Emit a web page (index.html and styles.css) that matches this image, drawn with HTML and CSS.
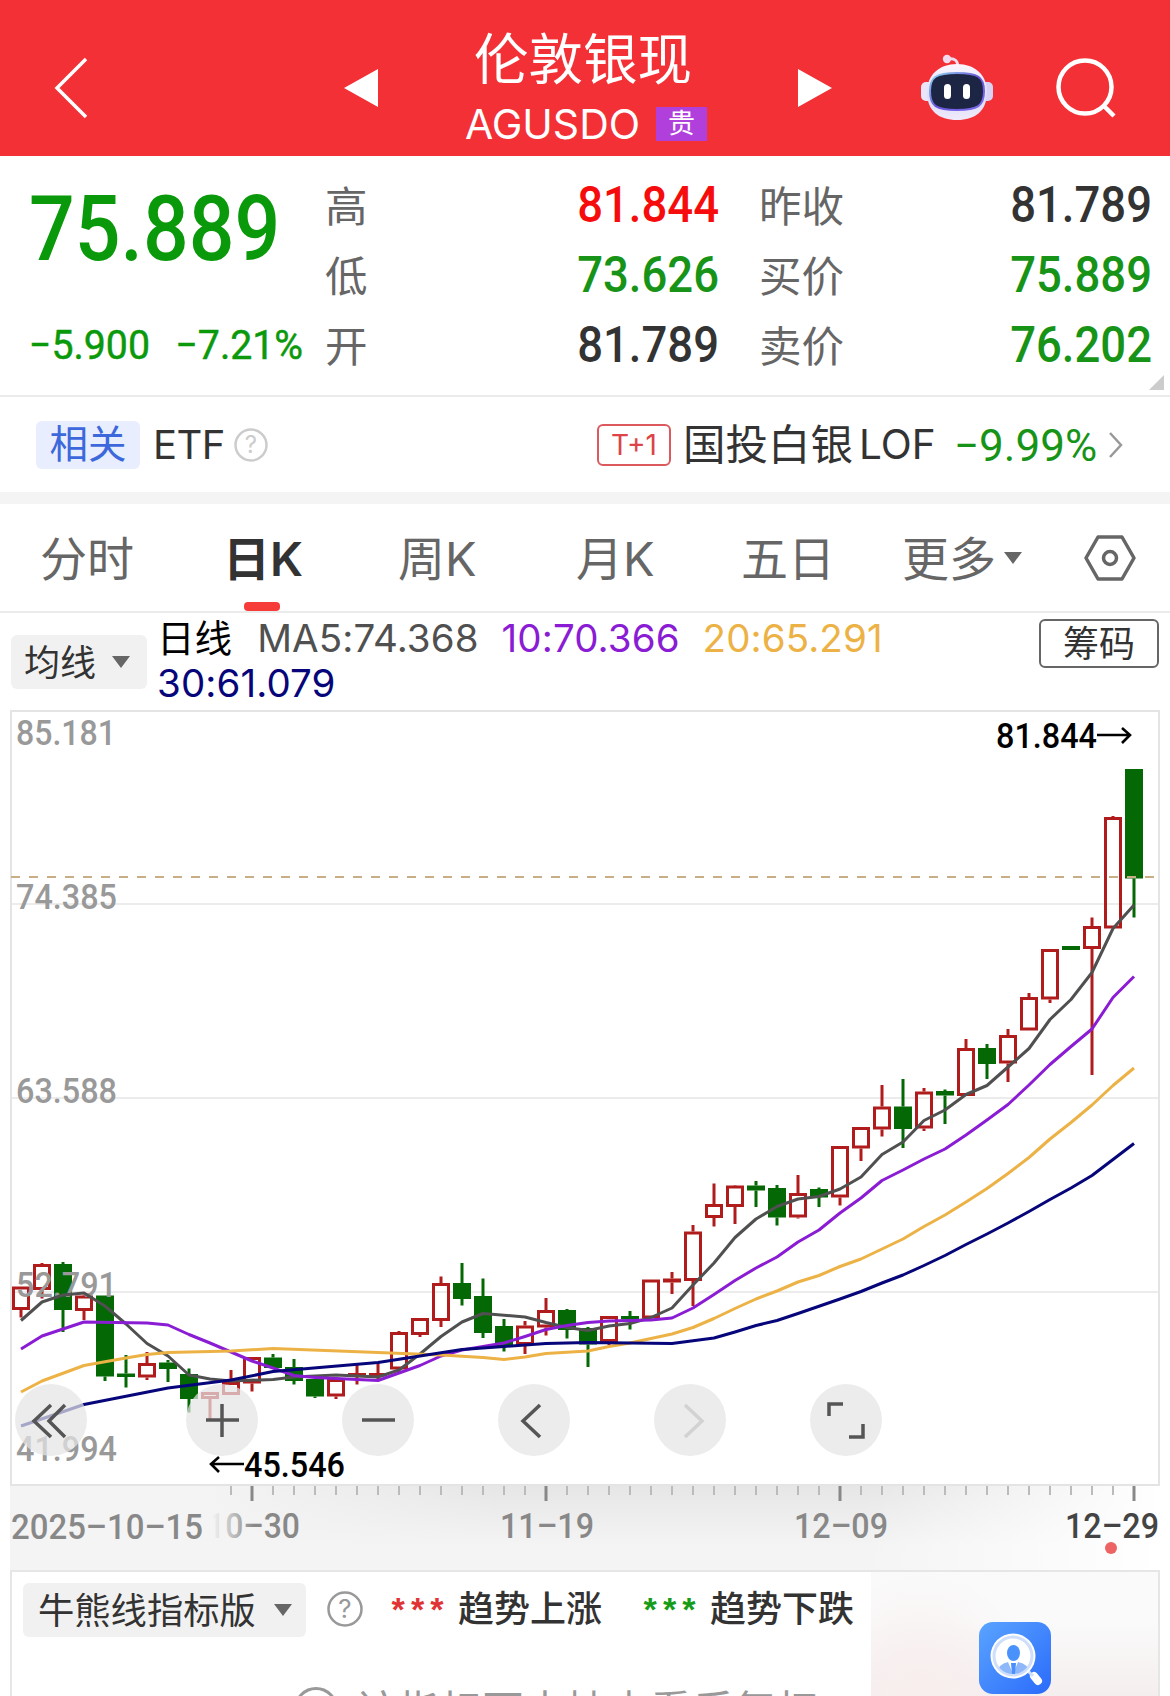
FILE: index.html
```html
<!DOCTYPE html>
<html lang="zh-CN">
<head>
    <meta charset="UTF-8">
    <meta name="viewport" content="width=device-width, initial-scale=1.0">
    <title>伦敦银现</title>
    <link rel="stylesheet" href="styles.css">
</head>
<body>

    <header class="header">
        <svg class="back" width="36" height="62" viewBox="0 0 36 62"><path d="M33 2 L4 31 L33 60" fill="none" stroke="#fff" stroke-width="3.5"/></svg>
        <svg class="prev" width="36" height="40" viewBox="0 0 36 40"><path d="M35 1 V39 L1 20 Z" fill="#fff"/></svg>
        <div class="title">
            <div class="name">伦敦银现</div>
            <div class="code">AGUSDO <span class="tag">贵</span></div>
        </div>
        <svg class="next" width="36" height="40" viewBox="0 0 36 40"><path d="M1 1 V39 L35 20 Z" fill="#fff"/></svg>
        <svg class="robot" width="72" height="68" viewBox="0 0 72 68">
            <defs>
                <linearGradient id="shell" x1="0" y1="0" x2="0" y2="1">
                    <stop offset="0" stop-color="#fbf6ff"/>
                    <stop offset=".6" stop-color="#dcdcf6"/>
                    <stop offset="1" stop-color="#f0eafc"/>
                </linearGradient>
                <linearGradient id="rim" x1="0" y1="0" x2="1" y2="1">
                    <stop offset="0" stop-color="#8fdcf0"/>
                    <stop offset=".5" stop-color="#6a55d8"/>
                    <stop offset="1" stop-color="#7d6cf0"/>
                </linearGradient>
            </defs>
            <path d="M27 5 Q37 3 37 14" fill="none" stroke="#f3d9ee" stroke-width="3"/>
            <circle cx="26" cy="5" r="4.2" fill="#f3d9ee"/>
            <rect x="0" y="28" width="14" height="19" rx="5" fill="#e9e4fa"/>
            <rect x="58" y="28" width="14" height="19" rx="5" fill="#d9d2f4"/>
            <path d="M36 10 C54 10 66 21 66 38 C66 57 54 66 36 66 C18 66 6 57 6 38 C6 21 18 10 36 10 Z" fill="url(#shell)"/>
            <path d="M36 19 C57 19 63 23 63 37 C63 52 57 56 36 56 C15 56 9 52 9 37 C9 23 15 19 36 19 Z" fill="#1d2545" stroke="url(#rim)" stroke-width="2"/>
            <rect x="23" y="30" width="7" height="15" rx="3.5" fill="#fff"/>
            <rect x="42" y="30" width="7" height="15" rx="3.5" fill="#fff"/>
        </svg>
        <svg class="search" width="62" height="62" viewBox="0 0 62 62"><circle cx="30" cy="30" r="26.5" fill="none" stroke="#fff" stroke-width="4.5"/><path d="M48 48 L59 59" stroke="#fff" stroke-width="4.5"/></svg>
    </header>

    <section class="quote">
        <div class="main-price">
            <div class="price">75.889</div>
            <div class="change"><span>−5.900</span><span>−7.21%</span></div>
        </div>
        <div class="quote-grid">
            <span class="label">高</span><span class="num up">81.844</span>
            <span class="label second">昨收</span><span class="num">81.789</span>
            <span class="label">低</span><span class="num down">73.626</span>
            <span class="label second">买价</span><span class="num down">75.889</span>
            <span class="label">开</span><span class="num">81.789</span>
            <span class="label second">卖价</span><span class="num down">76.202</span>
        </div>
        <span class="corner"></span>
    </section>

    <section class="related">
        <span class="related-tag">相关</span>
        <span class="etf">ETF</span>
        <svg class="help" width="34" height="34" viewBox="0 0 34 34"><circle cx="17" cy="17" r="15.5" fill="none" stroke="#ccc" stroke-width="2.5"/><text x="17" y="25" text-anchor="middle">?</text></svg>
        <span class="t1">T+1</span>
        <span class="fund">国投白银</span><span class="lof">LOF</span>
        <span class="fund-change">−9.99%</span>
        <svg class="arrow" width="16" height="28" viewBox="0 0 16 28"><path d="M2 2 L13 14 L2 26" fill="none" stroke="#999" stroke-width="2.5"/></svg>
    </section>

    <nav class="tabs">
        <span class="tab">分时</span>
        <span class="tab active">日<i>K</i></span>
        <span class="tab">周<i>K</i></span>
        <span class="tab month">月<i>K</i></span>
        <span class="tab">五日</span>
        <span class="tab more">更多<b class="caret"></b></span>
        <svg class="setting" width="52" height="46" viewBox="0 0 52 46"><path d="M14 2 H38 L50 23 L38 44 H14 L2 23 Z" fill="none" stroke="#666" stroke-width="3.5" stroke-linejoin="round"/><circle cx="26" cy="23" r="6.5" fill="none" stroke="#666" stroke-width="3.5"/></svg>
    </nav>

    <section class="ma-bar">
        <div class="select"><span>均线</span><b class="caret"></b></div>
        <div class="ma-list">
            <span class="ma-name">日线</span>
            <span class="ma5">MA5:74.368</span>
            <span class="ma10">10:70.366</span>
            <span class="ma20">20:65.291</span>
            <span class="ma30">30:61.079</span>
        </div>
        <div class="chip">筹码</div>
    </section>

    <svg id="chart" class="chart" width="1170" height="860" viewBox="0 710 1170 860">
        <defs>
            <linearGradient id="axisRight" x1="0" y1="0" x2="1" y2="0">
                <stop offset="0" stop-color="#fff" stop-opacity="0"/>
                <stop offset="1" stop-color="#fff"/>
            </linearGradient>
            <linearGradient id="axisShade" x1="0" y1="0" x2="0" y2="1">
                <stop offset="0" stop-color="#e6e6e6"/>
                <stop offset="1" stop-color="#f4f4f4"/>
            </linearGradient>
            <linearGradient id="axisLeft" x1="0" y1="0" x2="1" y2="0">
                <stop offset="0" stop-color="#f4f4f4"/>
                <stop offset="1" stop-color="#f4f4f4" stop-opacity="0"/>
            </linearGradient>
            <linearGradient id="dateFade" gradientUnits="userSpaceOnUse" x1="212" y1="0" x2="254" y2="0">
                <stop offset="0" stop-color="#888" stop-opacity="0"/>
                <stop offset="1" stop-color="#888"/>
            </linearGradient>
        </defs>

        <!-- grid -->
        <rect x="11" y="711" width="1148" height="774" fill="#fff" stroke="#e4e4e4" stroke-width="2"/>
        <path d="M11 904 H1159 M11 1098 H1159 M11 1292 H1159" stroke="#e6e6e6" stroke-width="1.5"/>

        <!-- time axis -->
        <rect x="10" y="1486" width="1150" height="84" fill="#f4f4f4"/>
        <rect x="200" y="1486" width="960" height="60" fill="url(#axisShade)"/>
        <rect x="200" y="1486" width="300" height="60" fill="url(#axisLeft)"/>
        <rect x="860" y="1486" width="300" height="84" fill="url(#axisRight)"/>

        <g id="candles"></g>
        <path d="M11 877 H1159" stroke="#c8ae84" stroke-width="2" stroke-dasharray="9 9"/>

        <g class="y-label">
            <text x="16" y="745" textLength="100" lengthAdjust="spacingAndGlyphs">85.181</text>
            <text x="16" y="909" textLength="101" lengthAdjust="spacingAndGlyphs">74.385</text>
            <text x="16" y="1103" textLength="101" lengthAdjust="spacingAndGlyphs">63.588</text>
            <text x="16" y="1297" textLength="101" lengthAdjust="spacingAndGlyphs">52.791</text>
            <text x="16" y="1461" textLength="101" lengthAdjust="spacingAndGlyphs">41.994</text>
        </g>
        <g id="lines" fill="none" stroke-width="3" stroke-linejoin="round"></g>

        <g class="mark">
            <text x="996" y="748" textLength="101" lengthAdjust="spacingAndGlyphs">81.844</text>
            <path d="M1097 735 H1130 M1122 728 L1130 735 L1122 743" fill="none" stroke="#000" stroke-width="2.6"/>
            <text x="244" y="1477" textLength="101" lengthAdjust="spacingAndGlyphs">45.546</text>
            <path d="M244 1464 H211 M219 1457 L211 1464 L219 1472" fill="none" stroke="#000" stroke-width="2.6"/>
        </g>

        <g id="ticks" stroke-width="2"></g>
        <g class="date">
            <text x="11" y="1539" textLength="192" lengthAdjust="spacingAndGlyphs">2025–10–15</text>
            <text x="207" y="1538" textLength="93" lengthAdjust="spacingAndGlyphs" fill="url(#dateFade)">10–30</text>
            <text x="500" y="1538" textLength="94" lengthAdjust="spacingAndGlyphs">11–19</text>
            <text x="794" y="1538" textLength="94" lengthAdjust="spacingAndGlyphs">12–09</text>
            <text x="1065" y="1538" textLength="94" lengthAdjust="spacingAndGlyphs" fill="#444">12–29</text>
        </g>
        <circle cx="1111" cy="1548" r="6" fill="#ee6363"/>

        <!-- floating buttons -->
        <g fill="#e4e4e4" fill-opacity=".72">
            <circle cx="51" cy="1420" r="36"/>
            <circle cx="222" cy="1420" r="36"/>
            <circle cx="378" cy="1420" r="36"/>
            <circle cx="534" cy="1420" r="36"/>
            <circle cx="690" cy="1420" r="36"/>
            <circle cx="846" cy="1420" r="36"/>
        </g>
        <g fill="none" stroke="#555" stroke-width="3.5">
            <path d="M51 1405 L34 1421 L51 1437 M65 1405 L49 1421 L65 1437"/>
            <path d="M206 1420 H239 M222 1404 V1437"/>
            <path d="M362 1420 H395"/>
            <path d="M540 1405 L523 1421 L540 1437"/>
            <path d="M685 1405 L702 1421 L685 1437" stroke="#d2d2d2"/>
            <path d="M829 1416 V1404 H843 M849 1437 H863 V1424"/>
        </g>
    </svg>

    <section class="indicator">
        <div class="select"><span>牛熊线指标版</span><b class="caret"></b></div>
        <svg class="help dark" width="36" height="36" viewBox="0 0 36 36"><circle cx="18" cy="18" r="16.5" fill="none" stroke="#999" stroke-width="2.5"/><text x="18" y="27" text-anchor="middle">?</text></svg>
        <span class="stars red">***</span>
        <span class="trend">趋势上涨</span>
        <span class="stars green">***</span>
        <span class="trend">趋势下跌</span>
        <div class="notice">
            <svg width="44" height="44" viewBox="0 0 44 44"><circle cx="22" cy="22" r="20.5" fill="none" stroke="#999" stroke-width="3"/><path d="M22 12 V25 M22 29 V33" stroke="#999" stroke-width="3"/></svg>
            <span>该指标不支持查看后复权</span>
        </div>
        <div class="promo">
            <svg width="72" height="72" viewBox="0 0 72 72">
                <defs>
                    <linearGradient id="blue" x1="0" y1="0" x2="1" y2="1">
                        <stop offset="0" stop-color="#5aa4ff"/>
                        <stop offset="1" stop-color="#2a6bfb"/>
                    </linearGradient>
                    <clipPath id="lens"><circle cx="34" cy="34" r="18"/></clipPath>
                </defs>
                <rect width="72" height="72" rx="14" fill="url(#blue)"/>
                <path d="M55 54 L59 59" stroke="#fff" stroke-width="8" stroke-linecap="round"/>
                <path d="M47 47 L54 54" stroke="#cfe0ff" stroke-width="3"/>
                <circle cx="34" cy="34" r="22.5" fill="#fff"/>
                <circle cx="34" cy="34" r="19" fill="#fff" stroke="#cfdffb" stroke-width="3"/>
                <g clip-path="url(#lens)">
                    <path d="M18 54 Q18 42 29 40 L34 52 L39 40 Q51 42 51 54 Z" fill="#8fb8fb"/>
                    <path d="M32 41 H37 L36 52 H33 Z" fill="#4a8ffb"/>
                </g>
                <ellipse cx="34.500" cy="31" rx="6.500" ry="8" fill="#4a92fb"/>
            </svg>
        </div>
    </section>

    <script>
        const START = 21;
        const STEP = 21;

        // [rising, high, body top, body bottom, low]
        const candles = [
            [1, 1286.5, 1286.5, 1310, 1317.5], [1, 1263, 1264, 1290, 1298.5], [0, 1262, 1264, 1310, 1332],
            [1, 1295, 1295.5, 1311, 1320], [0, 1295.5, 1295.5, 1376.5, 1381], [0, 1355, 1373.5, 1377, 1387.5],
            [1, 1352, 1363, 1377.5, 1380], [0, 1360, 1362.5, 1369, 1382], [0, 1368.5, 1374, 1399, 1412.5],
            [1, 1392, 1392, 1399, 1421], [1, 1370, 1382, 1395, 1395], [1, 1357, 1357, 1383.5, 1391.5],
            [0, 1354, 1357.5, 1368, 1368], [0, 1359, 1367, 1381, 1384.5], [0, 1379, 1379, 1396.5, 1398],
            [1, 1378, 1379, 1396.5, 1399], [1, 1364, 1373, 1377, 1384.5], [1, 1362, 1373, 1376.5, 1380],
            [1, 1331, 1332, 1369.5, 1372], [1, 1318, 1318, 1335, 1337], [1, 1276.5, 1283, 1321, 1327],
            [0, 1263, 1283, 1299, 1305.5], [0, 1278.5, 1296, 1333, 1338], [0, 1319, 1326, 1347, 1351.5],
            [1, 1321, 1325.5, 1345, 1354], [1, 1298, 1310, 1327.5, 1335.5], [0, 1309, 1310, 1330, 1338.5],
            [0, 1327, 1328, 1344.5, 1367], [1, 1316, 1316, 1342, 1345], [0, 1311, 1316, 1319.5, 1329.5],
            [1, 1279.5, 1279.5, 1318.5, 1318.5], [1, 1272, 1278.5, 1282.5, 1294], [1, 1225, 1231.5, 1281, 1306],
            [1, 1183.5, 1204, 1218, 1226.5], [1, 1185, 1185.5, 1207, 1224], [0, 1181, 1185.5, 1190.5, 1207],
            [0, 1185, 1188, 1217.5, 1225.5], [1, 1175, 1193, 1217.5, 1218.5], [0, 1187.5, 1189, 1197.5, 1207],
            [1, 1146, 1146, 1197.5, 1205.5], [1, 1127, 1127, 1148.5, 1161], [1, 1085, 1106.5, 1129.5, 1136.5],
            [0, 1079, 1106.5, 1129, 1148], [1, 1088, 1091.5, 1128.5, 1131], [0, 1089.5, 1091, 1095.5, 1124],
            [1, 1039, 1048, 1096, 1096], [0, 1044, 1048, 1064, 1079], [1, 1029, 1035, 1063.5, 1082],
            [1, 993, 997, 1030.5, 1030.5], [1, 949, 949, 999.5, 1003], [0, 946, 946, 950, 950],
            [1, 917.5, 926, 949, 1075], [1, 816, 817, 928.5, 928.5], [0, 769, 769, 878.5, 917.5]
        ];

        // each point is [day index, y]
        const lines = [
            { color: "#505050", points: [[0, 1320.5], [1, 1302], [2, 1295], [3, 1293], [4, 1306], [5, 1324], [6, 1343.5], [7, 1356], [8, 1375], [9, 1379], [10, 1381], [12, 1379.5], [13, 1377], [15, 1375], [17, 1377], [18, 1370], [19, 1354], [20, 1336.5], [21, 1322], [22, 1313.5], [24, 1317], [25, 1322.5], [26, 1327.5], [27, 1330.5], [28, 1326], [29, 1323.5], [30, 1317.5], [31, 1308], [32, 1285], [33, 1263], [34, 1237.5], [35, 1219], [36, 1206.5], [37, 1199], [38, 1196.5], [39, 1189], [40, 1177], [41, 1154.5], [42, 1142], [43, 1120.5], [44, 1110], [45, 1094.5], [46, 1085.5], [47, 1067], [48, 1048.5], [49, 1019.5], [50, 999.5], [51, 972.5], [52, 928.5], [53, 905]] },
            { color: "#8a1cd4", points: [[0, 1349], [1, 1336], [2, 1329], [3, 1322], [6, 1323], [7, 1325], [8, 1334.5], [9, 1343], [10, 1352], [11, 1361], [12, 1368], [13, 1375.5], [14, 1377.5], [17, 1380.5], [18, 1373], [19, 1365.5], [20, 1356], [21, 1350], [23, 1343], [24, 1336.5], [25, 1329.5], [26, 1325.5], [27, 1322.5], [28, 1321], [30, 1320], [31, 1318], [32, 1308], [33, 1294.5], [34, 1280.5], [35, 1268], [36, 1257], [37, 1242], [38, 1230], [39, 1213], [40, 1198], [41, 1180.5], [42, 1170], [43, 1159], [44, 1149], [45, 1135], [46, 1120], [47, 1104.5], [48, 1085], [49, 1064.5], [50, 1046.5], [51, 1029], [52, 997.5], [53, 976.5]] },
            { color: "#edb246", points: [[0, 1392], [1, 1381], [3, 1365.5], [5, 1358], [6, 1354.5], [7, 1352.5], [10, 1351], [12, 1348.5], [17, 1352.5], [20, 1355], [22, 1357.5], [23, 1359.5], [24, 1357], [25, 1353.5], [27, 1351], [28, 1346.5], [29, 1343], [30, 1338.5], [31, 1334], [32, 1327.5], [33, 1318.5], [34, 1308.5], [35, 1299], [36, 1291], [37, 1282], [38, 1275.5], [39, 1266.5], [40, 1259], [41, 1249], [42, 1239], [43, 1226.5], [44, 1215], [45, 1202], [46, 1188.5], [47, 1173.5], [48, 1157.5], [49, 1139], [50, 1122.5], [51, 1105], [52, 1085.5], [53, 1068]] },
            { color: "#06067a", points: [[0, 1426], [3, 1404.5], [7, 1388], [10, 1380], [12, 1371.5], [17, 1362.5], [19, 1356], [21, 1349.5], [23, 1346.5], [25, 1343.5], [27, 1342.5], [31, 1343.5], [33, 1338], [34, 1332], [35, 1325.5], [36, 1320.5], [37, 1313.5], [39, 1299], [40, 1291.5], [41, 1283], [42, 1275], [43, 1265.5], [44, 1255.5], [45, 1244.5], [46, 1234], [47, 1223], [48, 1211.5], [49, 1199.5], [50, 1188], [51, 1175.5], [52, 1159.5], [53, 1143.5]] }
        ];

        function drawCandles() {
            let html = "";
            candles.forEach(([rising, high, top, bottom, low], i) => {
                let x = START + i * STEP;
                let color = rising ? "#b01c1c" : "#046804";
                html += `<path d="M${x} ${high} V${top} M${x} ${bottom} V${low}" stroke="${color}" stroke-width="3"/>`;
                if (rising && bottom - top > 5) {
                    html += `<rect x="${x - 7.5}" y="${top + 1.5}" width="15" height="${bottom - top - 3}" fill="none" stroke="${color}" stroke-width="3"/>`;
                } else {
                    html += `<rect x="${x - 9}" y="${top}" width="18" height="${bottom - top}" fill="${color}"/>`;
                }
            });
            document.getElementById("candles").innerHTML = html;
        }

        function drawLines() {
            document.getElementById("lines").innerHTML = lines.map(line => {
                let points = line.points.map(([i, y]) => `${START + i * STEP},${y}`).join(" ");
                return `<polyline points="${points}" stroke="${line.color}"/>`;
            }).join("");
        }

        function drawTicks() {
            let html = "";
            for (let i = 10; i < candles.length; i++) {
                let x = START + i * STEP;
                let major = (i - 11) % 14 === 0;
                html += `<path d="M${x} 1486 V${major ? 1501 : 1495}" stroke="${major ? "#888" : "#bbb"}" stroke-width="${major ? 3 : 2}"/>`;
            }
            document.getElementById("ticks").innerHTML = html;
        }

        drawCandles();
        drawLines();
        drawTicks();
    </script>
</body>
</html>
```
FILE: styles.css
```css
body {
    font-family: Inter, "Noto Sans CJK SC", sans-serif;
    background: #fff;
    color: #333;
    margin: 0;
    width: 1170px;
    height: 1696px;
    overflow: hidden;
}

.header {
    display: flex;
    align-items: center;
    height: 156px;
    background: #f23036;
    color: #fff;
}

.header svg {
    flex: none;
    margin-top: 20px;
}

.back {
    margin-left: 53px;
}

.prev {
    margin-left: 254px;
}

.title {
    width: 418px;
    padding-right: 10px;
    box-sizing: border-box;
    text-align: center;
}

.name {
    font-size: 54.5px;
    line-height: 68px;
    margin-top: 18px;
}

.code {
    display: flex;
    justify-content: center;
    align-items: center;
    font-size: 41px;
    line-height: 56px;
    padding: 3px 0 0 6px;
    margin-bottom: -3px;
}

.tag {
    width: 51px;
    height: 34px;
    margin-left: 16px;
    background: #b03fdc;
    font-size: 27px;
    line-height: 33px;
}

.robot {
    margin-left: 88px;
}

.search {
    margin-left: 62px;
}

.quote {
    position: relative;
    display: flex;
    height: 241px;
    border-bottom: 2px solid #ebebeb;
    box-sizing: border-box;
}

.main-price {
    width: 296px;
    padding-left: 29px;
    color: #0a990a;
    font-family: Roboto, sans-serif;
    font-weight: 500;
    white-space: nowrap;
}

/* narrow digits */
.price {
    font-size: 91px;
    line-height: 100px;
    margin-top: 23px;
    transform: scaleX(0.885);
    transform-origin: left;
}

.change {
    display: flex;
    gap: 27px;
    font-size: 41.5px;
    line-height: 50px;
    font-weight: 400;
    margin-top: 41px;
    transform: scaleX(0.945);
    transform-origin: left;
    -webkit-text-stroke: 0.5px #0a990a;
}

.quote-grid {
    display: grid;
    grid-template-columns: 124px 270px 155px 278px;
    grid-auto-rows: 70px;
    align-items: center;
    height: 210px;
    padding-top: 13px;
}

.label {
    color: #666;
    font-size: 42.5px;
    margin-top: -2px;
}

.label.second {
    padding-left: 40px;
}

.num {
    color: #333;
    font-family: Roboto, sans-serif;
    font-size: 50.5px;
    font-weight: 500;
    text-align: right;
    transform: scaleX(0.9);
    transform-origin: right;
}

.num.up {
    color: #f60c0c;
}

.num.down {
    color: #179417;
}

.corner {
    position: absolute;
    right: 6px;
    bottom: 5px;
    border-left: 15px solid transparent;
    border-bottom: 15px solid #ccc;
}

.related {
    display: flex;
    align-items: center;
    height: 95px;
    padding-left: 36px;
    border-bottom: 12px solid #f4f4f4;
    white-space: nowrap;
}

.related-tag {
    width: 104px;
    height: 48px;
    border-radius: 6px;
    background: #e8eefe;
    color: #3d68dc;
    font-size: 38.5px;
    line-height: 46px;
    text-align: center;
}

.etf {
    width: 81px;
    margin-left: 13px;
    font-size: 40px;
    letter-spacing: -0.5px;
}

.help text {
    fill: #ccc;
    font-size: 24px;
}

.help.dark text {
    fill: #999;
    font-size: 26px;
}

.t1 {
    width: 70px;
    height: 38px;
    margin-left: 329px;
    border: 2px solid #dc5a5e;
    border-radius: 6px;
    color: #dc4448;
    font-size: 28px;
    line-height: 39px;
    text-align: center;
}

.fund {
    margin: -6px 0 0 12px;
    font-size: 42.5px;
}

.lof {
    margin-left: 6px;
    font-size: 40.5px;
}

.fund-change {
    width: 140px;
    margin-left: 18px;
    padding-top: 3px;
    color: #179417;
    font-family: Roboto, sans-serif;
    font-size: 44px;
    letter-spacing: 0.1px;
}

.arrow {
    margin-left: 14px;
}

.tabs {
    display: flex;
    align-items: center;
    height: 109px;
    padding-left: 40px;
    box-sizing: border-box;
    border-bottom: 2px solid #ebebeb;
    color: #666;
    font-size: 47px;
    white-space: nowrap;
}

.tab {
    position: relative;
    top: -2px;
    width: 178px;
}

.tab i {
    font-style: normal;
}

.tab.active {
    color: #333;
    font-weight: 600;
    padding-left: 5px;
    width: 175px;
}

.tab.active::after {
    content: "";
    position: absolute;
    left: 26px;
    bottom: -21px;
    width: 36px;
    height: 9px;
    border-radius: 4px;
    background: #f63c38;
}

.tab.month {
    width: 165px;
}

.tab.more {
    display: flex;
    align-items: center;
    width: 182px;
    margin-left: -17px;
}

.caret {
    border: 9px solid transparent;
    border-top: 12px solid #666;
    border-bottom: 0;
}

.tab .caret {
    margin: 5px 0 0 8px;
}

.ma-bar {
    display: flex;
    height: 97px;
    padding-left: 11px;
}

.select {
    display: flex;
    align-items: center;
    justify-content: space-between;
    box-sizing: border-box;
    width: 136px;
    height: 54px;
    margin-top: 22px;
    padding: 0 17px 0 13px;
    border-radius: 6px;
    background: #f1f1f1;
    font-size: 36px;
}

.select span {
    margin-top: -5px;
}

.ma-list {
    width: 882px;
    padding-left: 10px;
    font-size: 38.5px;
    line-height: 45px;
    letter-spacing: 0.1px;
    margin-top: 3px;
}

.ma-name {
    color: #000;
    font-size: 37.5px;
    line-height: 40px;
    margin-right: 14px;
}

.ma5 {
    color: #505050;
    margin-right: 12px;
}

.ma10 {
    color: #8a1cd4;
    margin-right: 12px;
}

.ma20 {
    color: #edb246;
}

.ma30 {
    display: block;
    color: #06067a;
}

.chip {
    width: 116px;
    height: 45px;
    margin-top: 6px;
    border: 2px solid #666;
    border-radius: 6px;
    box-sizing: content-box;
    font-size: 36px;
    line-height: 46px;
    text-align: center;
}

.chart {
    display: block;
    font-family: Roboto, sans-serif;
    font-size: 35px;
    font-weight: 500;
}

.y-label {
    fill: #999;
}

.mark {
    fill: #000;
}

.date {
    fill: #888;
}

.indicator {
    position: relative;
    display: flex;
    height: 126px;
    margin: 0 10px;
    padding-left: 11px;
    border: 2px solid #e6e6e6;
    border-bottom: 0;
    box-sizing: border-box;
    white-space: nowrap;
}

.indicator .select {
    width: 283px;
    margin-top: 11px;
    padding: 0 14px 0 15px;
    font-size: 36.3px;
}

.indicator .help {
    margin: 19px 0 0 21px;
}

.stars {
    width: 70px;
    margin: 22px 0 0 25px;
    font-family: "Liberation Mono", monospace;
    font-size: 34px;
    letter-spacing: -1px;
    font-weight: 700;
}

.stars.red {
    color: #e03434;
}

.stars.green {
    color: #179c17;
    margin-left: 38px;
}

.trend {
    font-size: 36px;
    font-weight: 500;
    line-height: 52px;
    margin-top: 11px;
}

.notice {
    position: absolute;
    left: 282px;
    top: 111px;
    display: flex;
    align-items: center;
    gap: 18px;
    height: 52px;
    color: #999;
    font-size: 42px;
}

.notice span {
    margin-top: -4px;
}

.promo {
    position: absolute;
    right: 0;
    top: 0;
    width: 287px;
    height: 124px;
    background: radial-gradient(circle at 50px 110px, #f8eeee, transparent 110px), linear-gradient(#fafafa 40%, #f5eeee);
}

.promo svg {
    display: block;
    margin: 50px 0 0 108px;
}
```
